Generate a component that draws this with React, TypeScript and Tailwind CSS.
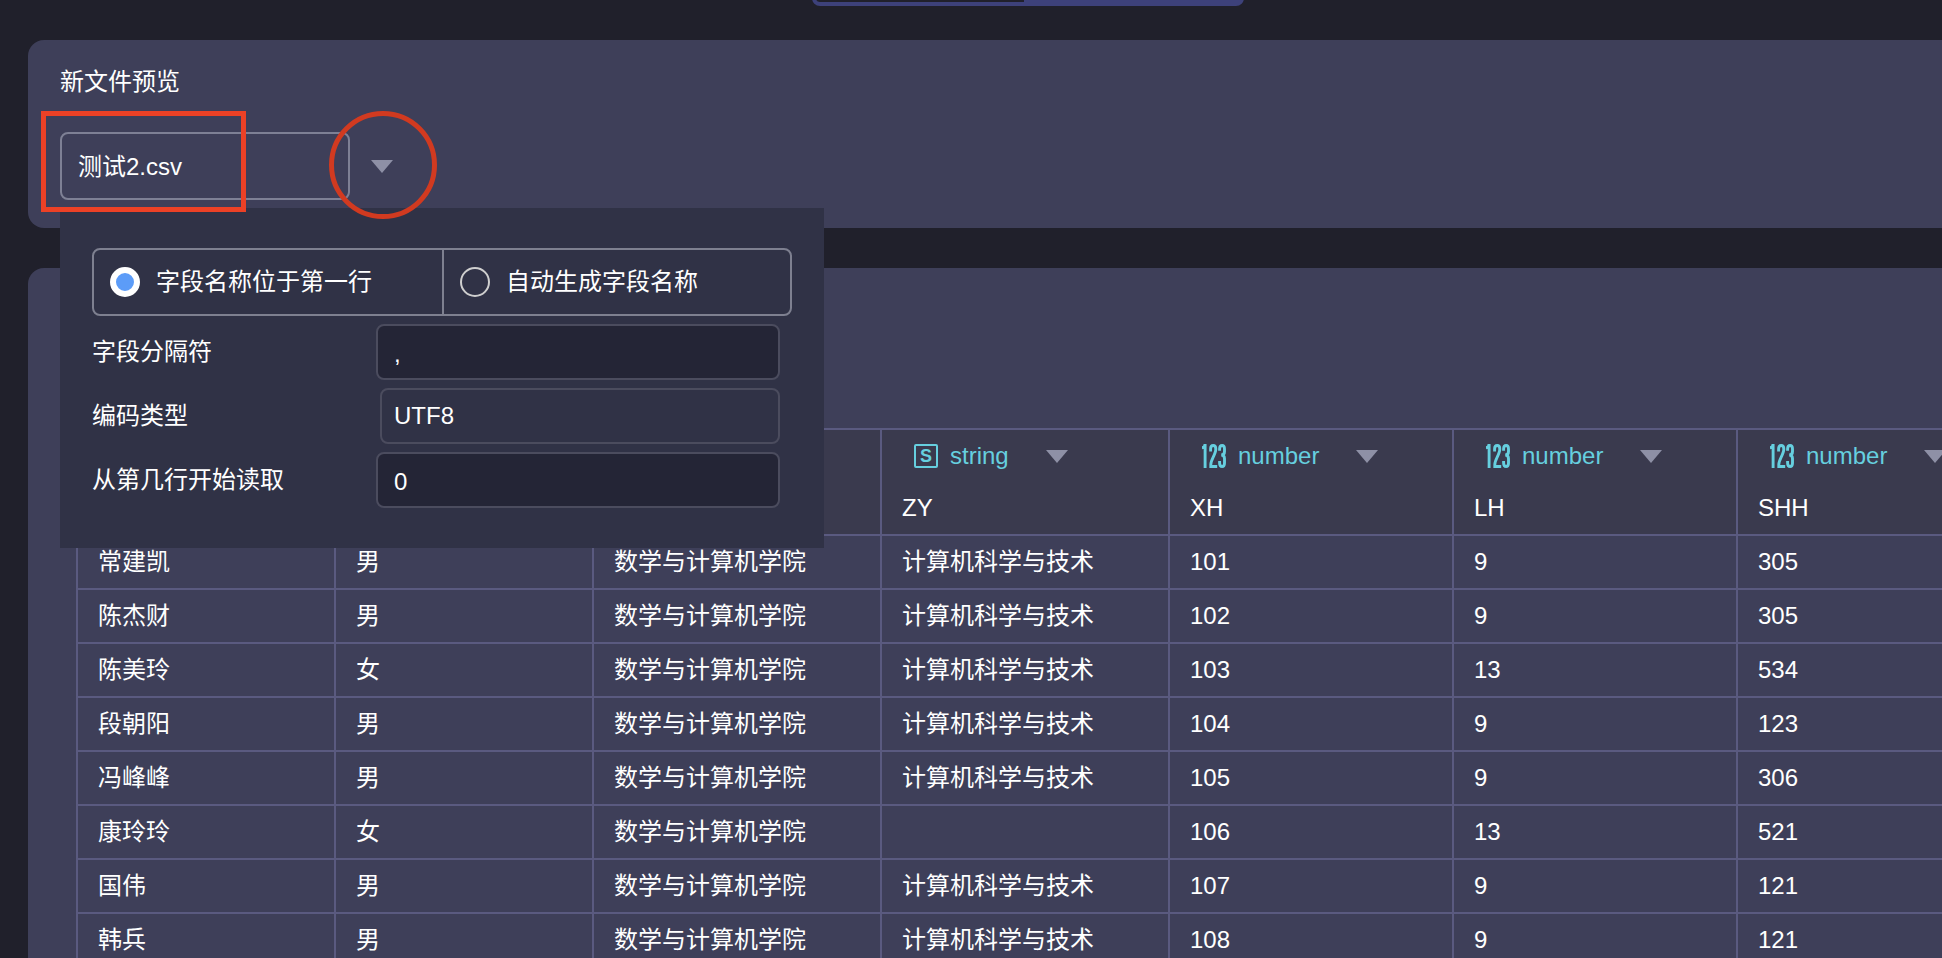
import { useState } from "react"
import { clsx } from "clsx"

type FieldType = "string" | "number"

interface Column {
  name?: string
  type?: FieldType
  width: string
}

const columns: Column[] = [
  { width: "w-[258px]" },
  { width: "w-[258px]" },
  { width: "w-[288px]" },
  { name: "ZY", type: "string", width: "w-[288px]" },
  { name: "XH", type: "number", width: "w-[284px]" },
  { name: "LH", type: "number", width: "w-[284px]" },
  { name: "SHH", type: "number", width: "w-[284px]" },
]

const rows = [
  ["常建凯", "男", "数学与计算机学院", "计算机科学与技术", "101", "9", "305"],
  ["陈杰财", "男", "数学与计算机学院", "计算机科学与技术", "102", "9", "305"],
  ["陈美玲", "女", "数学与计算机学院", "计算机科学与技术", "103", "13", "534"],
  ["段朝阳", "男", "数学与计算机学院", "计算机科学与技术", "104", "9", "123"],
  ["冯峰峰", "男", "数学与计算机学院", "计算机科学与技术", "105", "9", "306"],
  ["康玲玲", "女", "数学与计算机学院", "", "106", "13", "521"],
  ["国伟", "男", "数学与计算机学院", "计算机科学与技术", "107", "9", "121"],
  ["韩兵", "男", "数学与计算机学院", "计算机科学与技术", "108", "9", "121"],
]

function Caret() {
  return (
    <svg width="24" height="14" viewBox="0 0 24 14" className="fill-[#8e90a6]">
      <path d="M1 1h22L12 14z" />
    </svg>
  )
}

function TypeIcon({ type }: { type: FieldType }) {
  if (type === "string") {
    return (
      <span className="flex h-6 w-6 items-center justify-center rounded-xs border-2 border-[#66cfdf] text-lg leading-5 font-bold">
        S
      </span>
    )
  }
  return (
    <svg width="24" height="24" viewBox="0 0 24 24" fill="none" stroke="currentColor" strokeWidth="2.9">
      <path d="M0 3.8C1.9 3.6 2.9 2.4 3.1 0V24" />
      <path d="M8.6 7.5V5C8.6 2.6 9.4 1.5 11.2 1.5S13.8 2.6 13.8 5C13.8 10.5 8.8 15.5 8.8 20.5V22.5H15.2" />
      <path d="M17.6 6.8V5C17.6 2.6 18.4 1.5 20.1 1.5S22.5 2.6 22.5 5V7.4C22.5 9.8 21.4 11 19.2 11C21.6 11 22.5 12.4 22.5 14.8V19C22.5 21.4 21.8 22.5 20.1 22.5S17.6 21.4 17.6 19V17" />
    </svg>
  )
}

interface RadioOptionProps {
  label: string
  checked: boolean
  onSelect: () => void
  className?: string
}

function RadioOption({ label, checked, onSelect, className }: RadioOptionProps) {
  return (
    <label className={clsx("flex w-1/2 cursor-pointer items-center gap-4 px-4", className)}>
      <input
        type="radio"
        name="header-mode"
        checked={checked}
        onChange={onSelect}
        className="h-[30px] w-[30px] shrink-0 appearance-none rounded-full border-2 border-[#cfcfcf] checked:border-6 checked:border-white checked:bg-[#5c9cf8]"
      />
      {label}
    </label>
  )
}

function ParseOptions() {
  const [mode, setMode] = useState("first-row")
  const [separator, setSeparator] = useState(",")
  const [startRow, setStartRow] = useState("0")

  return (
    <div className="absolute top-[168px] left-8 z-10 w-[764px] bg-[#303246] px-8 py-10">
      <div className="flex h-[68px] rounded-lg border-2 border-[#7e8090]">
        <RadioOption
          label="字段名称位于第一行"
          checked={mode === "first-row"}
          onSelect={() => setMode("first-row")}
        />
        <RadioOption
          label="自动生成字段名称"
          checked={mode === "auto"}
          onSelect={() => setMode("auto")}
          className="border-l-2 border-[#7e8090]"
        />
      </div>
      <div className="mt-2 flex flex-col gap-2 pr-3">
        <div className="flex h-14 items-center justify-between">
          <label htmlFor="separator">字段分隔符</label>
          <input
            id="separator"
            value={separator}
            onChange={(e) => setSeparator(e.target.value)}
            className="h-14 w-[404px] rounded-lg border-2 border-[#4b4c5e] bg-[#242536] px-4 pt-1 outline-none"
          />
        </div>
        <div className="flex h-14 items-center justify-between">
          <label htmlFor="encoding">编码类型</label>
          <select
            id="encoding"
            className="h-14 w-[400px] appearance-none rounded-lg border-2 border-[#4b4c5e] bg-[#303246] px-3 outline-none"
          >
            <option>UTF8</option>
          </select>
        </div>
        <div className="flex h-14 items-center justify-between">
          <label htmlFor="start-row">从第几行开始读取</label>
          <input
            id="start-row"
            value={startRow}
            onChange={(e) => setStartRow(e.target.value)}
            className="h-14 w-[404px] rounded-lg border-2 border-[#4b4c5e] bg-[#242536] px-4 pt-1 outline-none"
          />
        </div>
      </div>
    </div>
  )
}

export default function App() {
  const [open, setOpen] = useState(true)
  const [fileName, setFileName] = useState("测试2.csv")

  return (
    <div className="flex h-screen flex-col overflow-hidden bg-[#20202b] pl-7 font-['Liberation_Sans','Noto_Sans_CJK_SC',sans-serif] text-2xl text-white">
      {/* bottom edge of the step switch */}
      <div className="flex h-[6px] shrink-0 items-end justify-center overflow-hidden pl-[86px]">
        <div className="flex h-14 w-[432px] rounded-lg border-4 border-[#3d417a]">
          <div className="w-[208px]" />
          <div className="flex-1 bg-[#3d417a]" />
        </div>
      </div>

      <section className="relative mt-[34px] h-[188px] shrink-0 rounded-l-2xl bg-[#3e3f59] px-8 pt-6">
        <h2 className="leading-9">新文件预览</h2>
        <div className="mt-8 flex items-center gap-5">
          <input
            aria-label="新文件预览"
            value={fileName}
            onChange={(e) => setFileName(e.target.value)}
            className="h-[68px] w-[290px] rounded-lg border-2 border-[#7e8095] px-4 pb-1 outline-none"
          />
          <button type="button" aria-expanded={open} onClick={() => setOpen(!open)}>
            <Caret />
          </button>
        </div>
        {open && <ParseOptions />}
        <div className="pointer-events-none absolute top-[71px] left-[13px] z-20 h-[101px] w-[205px] border-5 border-[#ec4126]" />
        <div className="pointer-events-none absolute top-[71px] left-[301px] z-20 h-[108px] w-[108px] rounded-full border-5 border-[#d13a20]" />
      </section>

      <section className="mt-10 flex-1 overflow-hidden rounded-tl-2xl bg-[#3e3f59] pt-40 pl-12">
        <table className="w-[1946px] table-fixed border-separate border-spacing-0 border-t-2 border-l-2 border-[#5a5a80] text-left">
          <thead>
            <tr className="h-[106px] bg-[#3a3a4e]">
              {columns.map((col, i) => (
                <th
                  key={i}
                  className={clsx("border-r-2 border-b-2 border-[#5a5a80] px-5 py-0 font-normal", col.width)}
                >
                  {col.type && (
                    <div className="flex flex-col gap-4">
                      <div className="flex items-center gap-3 pl-3 text-[#66cfdf]">
                        <TypeIcon type={col.type} />
                        <span className="leading-9">{col.type}</span>
                        <button type="button" className="pl-6">
                          <Caret />
                        </button>
                      </div>
                      <span className="leading-9">{col.name}</span>
                    </div>
                  )}
                </th>
              ))}
            </tr>
          </thead>
          <tbody>
            {rows.map((row) => (
              <tr key={row[4]} className="h-[54px]">
                {row.map((cell, i) => (
                  <td key={i} className="border-r-2 border-b-2 border-[#5a5a80] px-5 py-0">
                    {cell}
                  </td>
                ))}
              </tr>
            ))}
          </tbody>
        </table>
      </section>
    </div>
  )
}
